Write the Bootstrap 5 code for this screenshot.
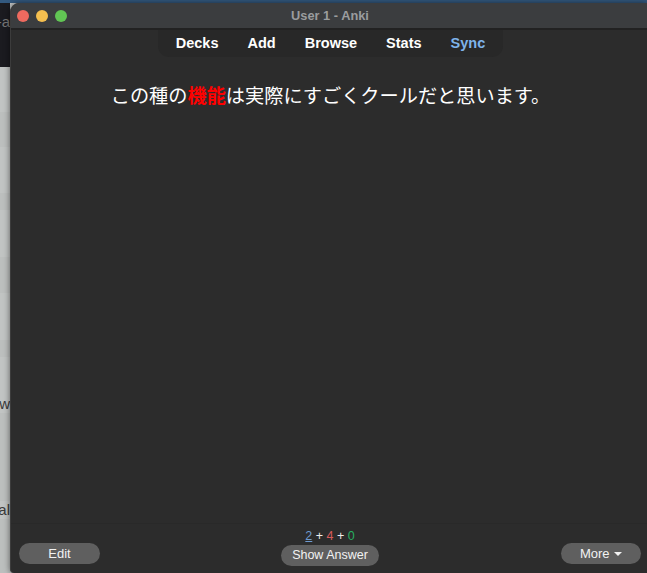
<!doctype html>
<html lang="ja"><head><meta charset="utf-8"><title>User 1 - Anki</title>
<link href="https://cdn.jsdelivr.net/npm/bootstrap@5.3.0/dist/css/bootstrap.min.css" rel="stylesheet">
<style>
html,body{height:573px;overflow:hidden;background:#c2c5c4}
body{font-family:"Liberation Sans",Arial,sans-serif;color:#fff}
.top-rule{height:3px;background:#33597f;flex:none}
.desk{flex:1;min-height:0}
.behind{width:10px;flex:none;overflow:hidden;background:#c2c5c4;color:#3a3a3a;font-size:15px;line-height:18px;white-space:nowrap}
.behind-row{flex:none;justify-content:flex-end;display:flex}
.behind-dark{height:64px;background:#1b1b20;color:#777;padding-top:10px}
.shade-a{background:#c1c4c3}.shade-b{background:#bcbfbe}
.h35{height:35px}.h45{height:45px}.h46{height:46px}.h36{height:36px}.h47{height:47px}.h17{height:17px}.h38{height:38px}.h18{height:18px}.h88{height:88px}
.behind-fill{flex:1}
.win{flex:1;min-width:0;background:#2c2c2c;border-left:1px solid #3c3c3c;border-radius:9px 0 0 4px;overflow:hidden;box-shadow:0 0 6px rgba(0,0,0,.55);position:relative}
.titlebar{height:27px;background:#3b3d3f;border-bottom:2px solid #222;color:#9a9c9e;font-size:12.8px;font-weight:700;padding-left:6px;flex:none;gap:7px}
.traffic{width:12px;height:12px;border-radius:50%}
.t-red{background:#ee6a5f}.t-yel{background:#f5bf4f}.t-grn{background:#61c554}
.title-text{left:2px;right:0;top:0;line-height:25px;text-align:center}
.toolbar{width:345px;height:27px;background:#282828;border-radius:0 0 11px 11px;margin-left:147px;font-size:14.5px;font-weight:700;line-height:26px;gap:29px;flex:none}
.toolbar a{color:#fff;text-decoration:none}
.toolbar a.sync{color:#7fb3ea}
.card-area{flex:1;min-height:0;padding-top:24px;padding-left:3px;font-family:"Noto Sans CJK JP",sans-serif;font-size:19.2px;line-height:28px;text-align:center}
.hl{color:#f00;font-weight:700}
.footer-bar{height:50px;border-top:1px solid #292929;flex:none;padding:0 6px 0 8px}
.anki-btn{background:#5f5f5f;color:#f2f2f2;border:0;border-radius:11px;height:21px;font-size:13px;line-height:21px;padding:0;text-align:center;flex:none}
.b-edit{width:81px;margin-top:19px}
.b-more{width:80px;margin-top:19px;margin-left:auto}
.b-show{width:98px;font-size:12.5px}
.mid{margin-left:181px;width:98px;flex:none}
.counts{font-size:12.5px;line-height:15px;margin-top:5px;margin-bottom:-1px;color:#eee}
.c-new{color:#6f9bd1;text-decoration:underline}.c-lrn{color:#d85b5b}.c-rev{color:#27ae60}
.caret-s{display:inline-block;border-left:4px solid transparent;border-right:4px solid transparent;border-top:4px solid #f2f2f2;vertical-align:2px;margin-left:1px}
</style></head>
<body class="d-flex flex-column">
<div class="top-rule"></div>
<div class="desk d-flex">
  <div class="behind d-flex flex-column">
    <div class="behind-row behind-dark"><span>-a</span></div>
    <div class="behind-row shade-a h45"></div>
    <div class="behind-row shade-b h35"></div>
    <div class="behind-row shade-a h46"></div>
    <div class="behind-row shade-b h17"></div>
    <div class="behind-row shade-a h47"></div>
    <div class="behind-row shade-b h36"></div>
    <div class="behind-row shade-a h47"></div>
    <div class="behind-row shade-b h17"></div>
    <div class="behind-row shade-a h38"></div>
    <div class="behind-row shade-a h18"><span>ow</span></div>
    <div class="behind-row shade-b h88"></div>
    <div class="behind-row shade-a h18"><span>al</span></div>
    <div class="behind-row shade-b behind-fill"></div>
  </div>
  <div class="win d-flex flex-column">
    <div class="titlebar position-relative d-flex align-items-center">
      <span class="traffic t-red"></span><span class="traffic t-yel"></span><span class="traffic t-grn"></span>
      <div class="title-text position-absolute">User 1 - Anki</div>
    </div>
    <nav class="toolbar d-flex justify-content-center">
      <a href="#">Decks</a><a href="#">Add</a><a href="#">Browse</a><a href="#">Stats</a><a href="#" class="sync">Sync</a>
    </nav>
    <div class="card-area">この種の<span class="hl">機能</span>は実際にすごくクールだと思います。</div>
    <div class="footer-bar d-flex align-items-start">
      <button class="btn anki-btn b-edit">Edit</button>
      <div class="mid text-center">
        <div class="counts"><span class="c-new">2</span> + <span class="c-lrn">4</span> + <span class="c-rev">0</span></div>
        <button class="btn anki-btn b-show">Show Answer</button>
      </div>
      <button class="btn anki-btn b-more">More <span class="caret-s"></span></button>
    </div>
  </div>
</div>
<script src="https://cdn.jsdelivr.net/npm/bootstrap@5.3.0/dist/js/bootstrap.bundle.min.js"></script>
</body></html>
